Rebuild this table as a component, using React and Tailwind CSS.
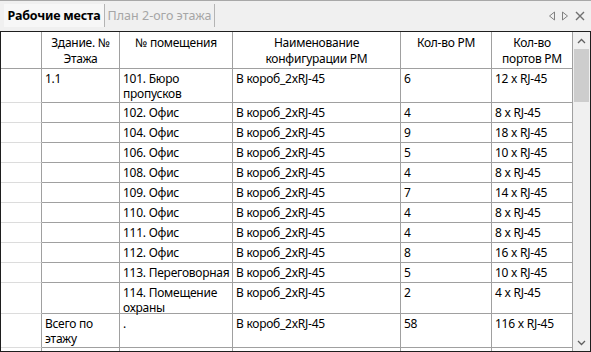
import React from "react";

const cols = [41, 78, 113, 168, 91, 81];

const rows = [
  { h: 34, c: ["1.1", "101. Бюро пропусков", "В короб_2xRJ-45", "6", "12 x RJ-45"] },
  { h: 20, c: ["", "102. Офис", "В короб_2xRJ-45", "4", "8 x RJ-45"] },
  { h: 20, c: ["", "104. Офис", "В короб_2xRJ-45", "9", "18 x RJ-45"] },
  { h: 20, c: ["", "106. Офис", "В короб_2xRJ-45", "5", "10 x RJ-45"] },
  { h: 20, c: ["", "108. Офис", "В короб_2xRJ-45", "4", "8 x RJ-45"] },
  { h: 20, c: ["", "109. Офис", "В короб_2xRJ-45", "7", "14 x RJ-45"] },
  { h: 20, c: ["", "110. Офис", "В короб_2xRJ-45", "4", "8 x RJ-45"] },
  { h: 20, c: ["", "111. Офис", "В короб_2xRJ-45", "4", "8 x RJ-45"] },
  { h: 20, c: ["", "112. Офис", "В короб_2xRJ-45", "8", "16 x RJ-45"] },
  { h: 20, c: ["", "113. Переговорная", "В короб_2xRJ-45", "5", "10 x RJ-45"] },
  { h: 31, c: ["", "114. Помещение охраны", "В короб_2xRJ-45", "2", "4 x RJ-45"] },
  { h: 34, c: ["Всего по этажу", ".", "В короб_2xRJ-45", "58", "116 x RJ-45"] },
  { h: 20, c: ["", "", "", "", ""] },
];

const headers = ["Здание. № Этажа", "№ помещения", "Наименование конфигурации РМ", "Кол-во РМ", "Кол-во портов РМ"];

export default function App() {
  return (
    <div
      className="w-[591px] h-[352px] bg-[#f0f0f0] overflow-hidden flex flex-col text-[12px] leading-[16px] text-black tracking-[-0.25px]"
      style={{ fontFamily: '"Noto Sans", "Open Sans", sans-serif' }}
    >
      {/* Tab bar */}
      <div className="h-[31px] border-t border-[#a8a8a8] flex items-start pt-[3px] shrink-0">
        <div className="ml-[4px] h-[23px] w-[100px] bg-[#f7f7f7] flex items-center justify-center font-bold text-[12.5px] tracking-[-0.2px]">
          Рабочие места
        </div>
        <div className="w-px h-[23px] bg-[#b4b4b4]" />
        <div className="h-[23px] w-[109px] flex items-center justify-center text-[#a6a6a6] text-[12.5px] tracking-[0px]">
          План 2-ого этажа
        </div>
        <div className="w-px h-[23px] bg-[#b4b4b4]" />
        <div className="flex-1" />
        <div className="flex items-center gap-[5px] h-[23px] mr-[6px] pt-[1px]">
          <svg width="8" height="10" viewBox="0 0 8 10">
            <path d="M6.5 1 L1.5 5 L6.5 9 Z" fill="none" stroke="#808080" strokeWidth="1" />
          </svg>
          <svg width="8" height="10" viewBox="0 0 8 10">
            <path d="M1.5 1 L6.5 5 L1.5 9 Z" fill="none" stroke="#808080" strokeWidth="1" />
          </svg>
          <svg width="10" height="10" viewBox="0 0 10 10" className="ml-[1px]">
            <path d="M1 1 L9 9 M9 1 L1 9" stroke="#707070" strokeWidth="1.4" />
          </svg>
        </div>
      </div>

      {/* Grid frame */}
      <div className="h-[321px] border border-[#1e1e1e] bg-white flex overflow-hidden">
        <div className="w-[572px] flex flex-col overflow-hidden">
          {/* Header */}
          <div className="flex h-[37px] shrink-0 border-b border-[#a0a0a0]">
            <div className="w-[41px] border-r border-[#a0a0a0] shrink-0" />
            {headers.map((t, i) => (
              <div
                key={i}
                style={{ width: cols[i + 1] }}
                className="shrink-0 border-r border-[#a0a0a0] text-center px-[6px] pt-[3px]"
              >
                {t}
              </div>
            ))}
          </div>
          {rows.map((r, ri) => (
            <div key={ri} style={{ height: r.h }} className="flex shrink-0">
              <div className="w-[41px] shrink-0 border-r border-[#a0a0a0] border-b border-b-[#dcdcdc]" />
              {r.c.map((t, i) => (
                <div
                  key={i}
                  style={{ width: cols[i + 1] }}
                  className="shrink-0 border-r border-b border-[#a0a0a0] pl-[3px] pr-[1px] pt-[2px] leading-[15px]"
                >
                  {t}
                </div>
              ))}
            </div>
          ))}
        </div>
        {/* Scrollbar */}
        <div className="w-[17px] bg-[#f0f0f0] flex flex-col items-center">
          <div className="h-[17px] w-full flex items-center justify-center">
            <svg width="9" height="6" viewBox="0 0 9 6">
              <path d="M1 5 L4.5 1.5 L8 5" fill="none" stroke="#606060" strokeWidth="1.3" />
            </svg>
          </div>
          <div className="w-[15px] h-[53px] bg-[#cdcdcd]" />
          <div className="flex-1" />
          <div className="h-[17px] w-full flex items-center justify-center">
            <svg width="9" height="6" viewBox="0 0 9 6">
              <path d="M1 1 L4.5 4.5 L8 1" fill="none" stroke="#606060" strokeWidth="1.3" />
            </svg>
          </div>
        </div>
      </div>
    </div>
  );
}
